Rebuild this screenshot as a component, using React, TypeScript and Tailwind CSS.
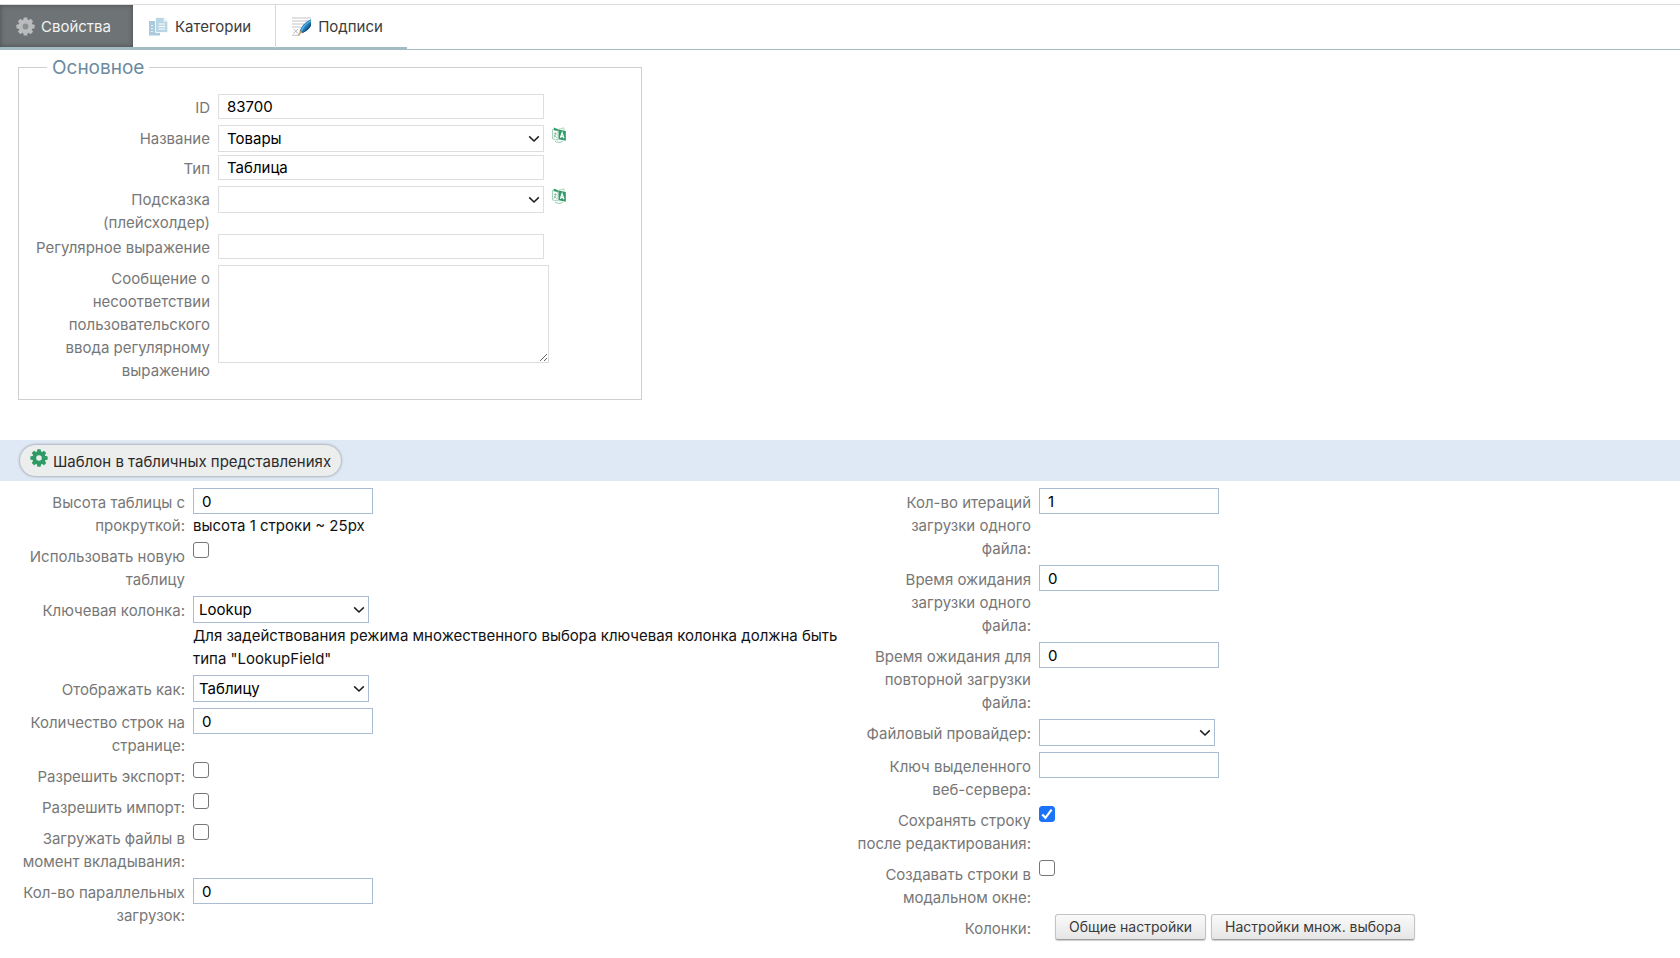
import { useId, type ReactNode } from 'react';

const TEETH = [0, 45, 90, 135, 180, 225, 270, 315];

function GearIcon({ className, fill, hole }: { className: string; fill: string; hole: string }) {
  return (
    <svg viewBox="0 0 20 20" className={className} aria-hidden="true">
      <g fill={fill}>
        <circle cx="10" cy="10" r="7.4" />
        {TEETH.map((a) => (
          <path key={a} d="M7.6 4 L8 1 Q8.1 0.4 8.7 0.4 H11.3 Q11.9 0.4 12 1 L12.4 4 Z" transform={`rotate(${a} 10 10)`} />
        ))}
      </g>
      <circle cx="10" cy="10" r="3.1" fill={hole} />
    </svg>
  );
}

function DocumentsIcon() {
  return (
    <svg viewBox="0 0 19 19" className="size-[19px]" aria-hidden="true">
      <path d="M0 4 H7 V15 H11 V18.5 H0 Z" fill="#a9cbdd" />
      <path d="M2 8.5 H4 M2 11.5 H4 M2 14.5 H4" stroke="#e6f1f6" strokeWidth="1.2" />
      <path d="M6.5 0.5 H15 L18.8 4.5 V15.5 H6.5 Z" fill="#b9d6e4" stroke="#fff" strokeWidth="0.8" />
      <path d="M14.5 0.5 V4.8 H18.8 Z" fill="#e9f3f8" />
      <path d="M9.5 7 H16 M9.5 9.5 H16 M9.5 12 H16" stroke="#fff" strokeWidth="1.2" />
    </svg>
  );
}

function SignatureIcon() {
  return (
    <svg viewBox="0 0 19 19" className="size-[19px]" aria-hidden="true">
      <path d="M0 1 H19 M0 4 H17 M0 7 H12 M0 10 H9 M0 18.3 H8" stroke="#c4c4c4" strokeWidth="1.1" />
      <path d="M1.5 12 L6 16.5 M6 12 L1.5 16.5" stroke="#b5b5b5" strokeWidth="1" />
      <path d="M19 2.2 V8 C17.5 11.5 13.5 15 9.5 16.2 L7.6 14.6 C8.6 10 13.5 4.5 19 2.2 Z" fill="#1c78b4" />
      <path d="M18.5 3 C14 5.5 10 10 8.6 13.6 L10 14.4 C12 10 15 6.5 19 4.5 Z" fill="#58b1df" />
      <path d="M19 6 C16.5 10 13 13.5 9.8 16 C14 15 17.8 11.5 19 8.5 Z" fill="#164d7c" />
      <path d="M8.2 13.6 L10.3 15.6 L6.4 18.2 Z" fill="#d99a4e" />
      <path d="M7 17.1 L7.5 17.6 L6.2 18.5 Z" fill="#333" />
    </svg>
  );
}

function TranslateIcon() {
  return (
    <svg viewBox="0 0 14 16" className="h-4 w-3.5" aria-hidden="true">
      <path d="M0.5 2.5 L6 4 V13 L0.5 12 Z" fill="#fff" stroke="#9bcdb2" strokeWidth="0.9" />
      <path d="M1.8 0.6 L6.6 2.5 V4 L1.8 3 Z" fill="#2f9b66" />
      <path d="M7 2.3 L12 0.8 V3" fill="none" stroke="#9bcdb2" strokeWidth="0.8" />
      <path d="M6.6 2.4 L13.8 4 V13.8 L6.6 12.2 Z" fill="#2f9b66" />
      <path d="M1.8 6.2 L4.8 6.9 M3.6 5.4 L3.3 8 L1.8 10.6 M2.2 8 L4.8 10.8" fill="none" stroke="#6db890" strokeWidth="0.8" />
      <path d="M8.4 10.8 L10.1 5.8 L11.9 11.3 M9 9.3 L11.4 9.7" fill="none" stroke="#fff" strokeWidth="1.3" />
      <path d="M3 14.2 C5 15.6 8.5 15.8 10.8 14.4" fill="none" stroke="#8cc6a7" strokeWidth="0.9" />
    </svg>
  );
}

function Tab({ icon, label, active, last }: { icon: ReactNode; label: string; active?: boolean; last?: boolean }) {
  return (
    <button
      type="button"
      role="tab"
      aria-selected={!!active}
      className={
        'flex h-11 items-center border-b-2 border-b-[#a3bcc4] pl-4 ' +
        (active
          ? 'gap-1.5 bg-[#6e7375] pr-[22px] text-[#f2f2f2] shadow-[inset_0_0_5px_rgba(0,0,0,0.35)]'
          : last
            ? 'gap-[7px] pr-6 text-[#3c3c3c]'
            : 'gap-[7px] border-r border-r-[#d5d8de] pr-6 text-[#3c3c3c]')
      }
    >
      {icon}
      {label}
    </button>
  );
}

function Chevron() {
  return (
    <svg viewBox="0 0 12 8" className="pointer-events-none absolute right-1 top-2.5 h-2 w-3" aria-hidden="true">
      <path d="M1.2 1.4 L6 6 L10.8 1.4" fill="none" stroke="#1d1d1d" strokeWidth="1.5" />
    </svg>
  );
}

function MainRow({ id, label, children }: { id: string; label: string; children: ReactNode }) {
  return (
    <div className="flex items-start gap-2">
      <label htmlFor={id} className="w-[183px] shrink-0 pt-0.5 text-right text-[#777]">
        {label}
      </label>
      {children}
    </div>
  );
}

const mainInput = 'mb-1.5 block h-[25px] w-[326px] border border-[#dedede] bg-white px-2 text-black';

function MainSelect({ id, value }: { id: string; value: string }) {
  return (
    <>
      <div className="relative mb-[3px] w-[326px]">
        <select id={id} className="block h-[27px] w-full appearance-none border border-[#dedede] bg-white px-2 text-black">
          <option>{value}</option>
        </select>
        <Chevron />
      </div>
      <button type="button" aria-label="Перевод" className="pt-0.5">
        <TranslateIcon />
      </button>
    </>
  );
}

function Row({ label, children }: { label: string; children: (id: string) => ReactNode }) {
  const id = useId();
  return (
    <div className="flex items-start gap-2">
      <label htmlFor={id} className="w-[175px] shrink-0 whitespace-pre-line pt-[3px] text-right text-[#777]">
        {label}
      </label>
      <div className="min-w-0 flex-1">{children(id)}</div>
    </div>
  );
}

function TextRow({ label, value, hint }: { label: string; value: string; hint?: string }) {
  return (
    <Row label={label}>
      {(id) => (
        <>
          <input id={id} type="text" defaultValue={value} className="block h-[26px] w-[180px] border border-[#a9bcd4] bg-white px-2 text-black" />
          {hint && <p>{hint}</p>}
        </>
      )}
    </Row>
  );
}

function SelectRow({ label, value, hint }: { label: string; value: string; hint?: string }) {
  return (
    <Row label={label}>
      {(id) => (
        <>
          <div className="relative mb-px w-44">
            <select id={id} className="block h-[27px] w-full appearance-none border border-[#a9bcd4] bg-white px-[5px] text-black">
              <option>{value}</option>
            </select>
            <Chevron />
          </div>
          {hint && <p>{hint}</p>}
        </>
      )}
    </Row>
  );
}

function CheckRow({ label, checked }: { label: string; checked?: boolean }) {
  return (
    <Row label={label}>
      {(id) => (
        <span className="relative block size-4">
          <input
            id={id}
            type="checkbox"
            defaultChecked={checked}
            className="peer block size-4 appearance-none rounded-[3px] border border-[#767676] bg-white checked:border-[#1a73f8] checked:bg-[#1a73f8]"
          />
          <svg viewBox="0 0 16 16" className="pointer-events-none absolute inset-0 hidden size-4 peer-checked:block" aria-hidden="true">
            <path d="M3.3 8.6 L6.4 11.8 L12.6 3.6" fill="none" stroke="#fff" strokeWidth="2.2" />
          </svg>
        </span>
      )}
    </Row>
  );
}

const plainButton =
  'h-[26px] rounded-[3px] border border-[#c3c3c3] border-b-[#a0a0a0] bg-linear-to-b from-[#fafafa] to-[#e6e6e6] px-[13px] text-sm text-[#3a3a3a] shadow-[0_1px_1px_rgba(0,0,0,0.2)]';

export default function App() {
  return (
    <div className="min-h-screen bg-white pt-1 font-['Inter','Liberation_Sans',sans-serif] text-[15px] leading-[23px] text-[#111]">
      <div role="tablist" className="flex items-start border-b border-b-[#a3bcc4] border-t border-t-[#dcdcdc]">
        <Tab active label="Свойства" icon={<GearIcon className="size-[19px]" fill="#b9bbbc" hole="#8b8f91" />} />
        <Tab label="Категории" icon={<DocumentsIcon />} />
        <Tab last label="Подписи" icon={<SignatureIcon />} />
      </div>

      <fieldset className="mx-[18px] mt-1.5 max-w-[624px] border border-[#cfcfcf] pb-[17px] pl-2">
        <legend className="ml-5 px-[5px] text-[19px] leading-[23px] text-[#6c8ba1]">Основное</legend>
        <div className="pt-[15px]">
          <MainRow id="f-id" label="ID">
            <input id="f-id" type="text" defaultValue="83700" className={mainInput} />
          </MainRow>
          <MainRow id="f-name" label="Название">
            <MainSelect id="f-name" value="Товары" />
          </MainRow>
          <MainRow id="f-type" label="Тип">
            <input id="f-type" type="text" defaultValue="Таблица" className={mainInput} />
          </MainRow>
          <MainRow id="f-hint" label="Подсказка (плейсхолдер)">
            <MainSelect id="f-hint" value="" />
          </MainRow>
          <MainRow id="f-regex" label="Регулярное выражение">
            <input id="f-regex" type="text" className={mainInput} />
          </MainRow>
          <MainRow id="f-message" label="Сообщение о несоответствии пользовательского ввода регулярному выражению">
            <textarea id="f-message" className="block h-[98px] w-[331px] border border-[#dedede] bg-white px-2 text-black" />
          </MainRow>
        </div>
      </fieldset>

      <div className="mt-10 bg-[#dfe8f5] py-[5px] pl-5">
        <button
          type="button"
          className="flex h-[31px] items-start gap-[5px] rounded-full bg-[#eceeed] px-2.5 pt-1 text-[#2b2b2b] shadow-[0_0_3px_rgba(0,0,0,0.45)]"
        >
          <GearIcon className="size-[18px]" fill="#2f9b66" hole="#eceeed" />
          <span className="pt-px">Шаблон в табличных представлениях</span>
        </button>
      </div>

      <div className="grid grid-cols-2 pb-4 pt-[7px]">
        <div className="flex flex-col gap-[5px] pl-2.5">
          <TextRow label="Высота таблицы с прокруткой:" value="0" hint="высота 1 строки ~ 25px" />
          <CheckRow label="Использовать новую таблицу" />
          <SelectRow
            label="Ключевая колонка:"
            value="Lookup"
            hint={'Для задействования режима множественного выбора ключевая колонка должна быть типа "LookupField"'}
          />
          <SelectRow label="Отображать как:" value="Таблицу" />
          <TextRow label="Количество строк на странице:" value="0" />
          <CheckRow label="Разрешить экспорт:" />
          <CheckRow label="Разрешить импорт:" />
          <CheckRow label="Загружать файлы в момент вкладывания:" />
          <TextRow label="Кол-во параллельных загрузок:" value="0" />
        </div>

        <div className="flex flex-col gap-[5px] pl-4">
          <TextRow label={'Кол-во итераций загрузки одного\nфайла:'} value="1" />
          <TextRow label={'Время ожидания загрузки одного\nфайла:'} value="0" />
          <TextRow label="Время ожидания для повторной загрузки файла:" value="0" />
          <SelectRow label="Файловый провайдер:" value="" />
          <TextRow label="Ключ выделенного веб-сервера:" value="" />
          <CheckRow label="Сохранять строку после редактирования:" checked />
          <CheckRow label="Создавать строки в модальном окне:" />
          <Row label="Колонки:">
            {(id) => (
              <div className="flex gap-[5px] pl-4">
                <button id={id} type="button" className={plainButton}>
                  Общие настройки
                </button>
                <button type="button" className={plainButton}>
                  Настройки множ. выбора
                </button>
              </div>
            )}
          </Row>
        </div>
      </div>
    </div>
  );
}
